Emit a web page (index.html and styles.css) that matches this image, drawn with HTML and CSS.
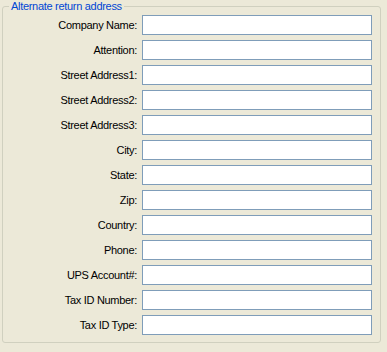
FILE: index.html
```html
<!DOCTYPE html>
<html lang="en">
<head>
    <meta charset="UTF-8">
    <meta name="viewport" content="width=device-width, initial-scale=1.0">
    <title>Alternate return address</title>
    <link rel="stylesheet" href="styles.css">
</head>
<body>
    <fieldset class="group-box">
        <legend>Alternate return address</legend>
        <div class="form-grid">
            <label for="company">Company Name:</label>
            <input type="text" id="company">
            <label for="attention">Attention:</label>
            <input type="text" id="attention">
            <label for="street1">Street Address1:</label>
            <input type="text" id="street1">
            <label for="street2">Street Address2:</label>
            <input type="text" id="street2">
            <label for="street3">Street Address3:</label>
            <input type="text" id="street3">
            <label for="city">City:</label>
            <input type="text" id="city">
            <label for="state">State:</label>
            <input type="text" id="state">
            <label for="zip">Zip:</label>
            <input type="text" id="zip">
            <label for="country">Country:</label>
            <input type="text" id="country">
            <label for="phone">Phone:</label>
            <input type="text" id="phone">
            <label for="ups-account">UPS Account#:</label>
            <input type="text" id="ups-account">
            <label for="tax-id">Tax ID Number:</label>
            <input type="text" id="tax-id">
            <label for="tax-type">Tax ID Type:</label>
            <input type="text" id="tax-type">
        </div>
    </fieldset>
</body>
</html>
```

FILE: styles.css
```css
:root {
    --window-bg: #ece9d8;
    --group-border: #d0d0bf;
    --legend-color: #0046d5;
    --input-border: #7f9db9;
}

* {
    box-sizing: border-box;
    margin: 0;
    padding: 0;
}

body {
    font-family: "Liberation Sans", Arial, sans-serif;
    font-size: 11px;
    letter-spacing: -0.3px;
    color: #000;
    background-color: var(--window-bg);
    height: 352px;
    overflow: hidden;
}

.group-box {
    margin: 0 6px 0 2px;
    padding: 2px 8px 7px 0;
    border: 1px solid var(--group-border);
    border-radius: 3px;
    min-width: 0;
}

.group-box legend {
    margin-left: 6px;
    padding: 0 2px 0 2px;
    color: var(--legend-color);
    line-height: 13px;
}

.form-grid {
    display: grid;
    grid-template-columns: 1fr 230px;
    column-gap: 5px;
    row-gap: 5px;
    align-items: center;
}

.form-grid label {
    text-align: right;
    white-space: nowrap;
}

.form-grid input {
    height: 20px;
    width: 100%;
    border: 1px solid var(--input-border);
    background-color: #fff;
    font: inherit;
    padding: 0 3px;
}
```
